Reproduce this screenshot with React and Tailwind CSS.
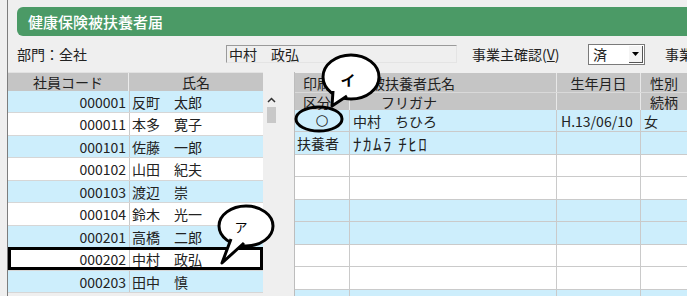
import React from 'react';

const employees = [
  ['000001', '反町　太郎'],
  ['000011', '本多　寛子'],
  ['000101', '佐藤　一郎'],
  ['000102', '山田　紀夫'],
  ['000103', '渡辺　崇'],
  ['000104', '鈴木　光一'],
  ['000201', '高橋　二郎'],
  ['000202', '中村　政弘'],
  ['000203', '田中　慎'],
];

const dependents = [
  { kubun: '○', name: '中村　ちひろ', birth: 'H.13/06/10', sex: '女', center: true },
  { kubun: '扶養者', name: 'ﾅｶﾑﾗ ﾁﾋﾛ', birth: '', sex: '', kana: true },
  {}, {}, {}, {}, {}, {}, {},
];

// annotation bubbles drawn over the page
function Callouts() {
  return (
    <svg className="absolute left-0 top-0 pointer-events-none" width="687" height="296">
      {/* ア */}
      <ellipse cx="246" cy="226" rx="27" ry="20" fill="#fff" stroke="#000" strokeWidth="3" />
      <path d="M231 239 L222 263 L244 243" fill="#fff" stroke="#000" strokeWidth="3" strokeLinejoin="round" />
      <text x="241" y="232" fontSize="13" textAnchor="middle" fill="#000" fontFamily="Noto Sans CJK JP, sans-serif">ア</text>

      {/* イ */}
      <ellipse cx="351" cy="77" rx="28" ry="22" fill="#fff" stroke="#000" strokeWidth="3" />
      <path d="M333 91 L332 106 L347 96" fill="#fff" stroke="#000" strokeWidth="3" strokeLinejoin="round" />
      <text x="348" y="86" fontSize="15" textAnchor="middle" fill="#000" fontWeight="bold" fontFamily="Noto Sans CJK JP, sans-serif">イ</text>
      <ellipse cx="319" cy="119" rx="23" ry="12" fill="none" stroke="#000" strokeWidth="3" />
    </svg>
  );
}

export default function App() {
  return (
    <div className="relative flex w-[687px] h-[296px] overflow-hidden bg-[#efefef] text-[14px] leading-none text-[#222] font-['Noto_Sans_CJK_JP',sans-serif]">
      <div className="w-[7px] shrink-0" />
      <div className="flex flex-col flex-1 min-w-0 border-l border-[#7d7d7d]">
        {/* title */}
        <div className="shrink-0 pl-[9px] pt-[7px]">
          <div className="flex items-center h-[29px] pl-[11px] rounded-l-[6px] bg-[#4b9a66] text-white text-[15px] font-medium">
            健康保険被扶養者届
          </div>
        </div>

        {/* filter row */}
        <div className="flex shrink-0 items-center h-[36px] pl-[9px] overflow-hidden">
          <span className="w-[209px] shrink-0">部門：全社</span>
          <div className="flex items-center w-[231px] h-[18px] shrink-0 pl-[2px] border-t border-l border-[#9a9a9a] border-r border-b border-r-[#e4e4e4] border-b-[#e4e4e4]">
            中村　政弘
          </div>
          <span className="w-[116px] shrink-0 ml-[15px]">事業主確認(<u>V</u>)</span>
          <div className="flex w-[57px] h-[21px] shrink-0 bg-white border border-[#7a7a7a]">
            <span className="flex-1 flex items-center pl-[4px]">済</span>
            <div className="flex items-center justify-center w-[14px] m-[1px] bg-[#f4f4f4] border-r border-b border-[#555]">
              <svg width="7" height="4" viewBox="0 0 7 4"><path d="M0 0 H7 L3.5 4 Z" fill="#000" /></svg>
            </div>
          </div>
          <span className="ml-[20px] shrink-0 whitespace-nowrap">事業</span>
        </div>

        {/* tables */}
        <div className="flex flex-1 min-h-0">
          {/* employee list */}
          <div className="flex flex-col w-[255px] shrink-0">
            <div className="flex shrink-0 h-[19px] bg-[#c5c5c5] border-t border-[#e2e2e2]">
              <div className="flex items-center justify-center w-[121px] border-r border-[#ececec]">社員コード</div>
              <div className="flex items-center justify-center flex-1">氏名</div>
            </div>
            {employees.map(([code, name], i) => (
              <div
                key={code}
                className={`relative flex shrink-0 ${i % 2 ? 'h-[23px]' : 'h-[22px]'} ${i % 2 === 0 ? 'bg-[#cdeefc]' : 'bg-white'} border-b border-[#d6d6d6]`}
              >
                <div className="flex items-center justify-end w-[121px] pr-[3px]">{code}</div>
                <div className="flex items-center flex-1 pl-[2px] border-l border-[#c9c9c9]">{name}</div>
                {code === '000202' && <div className="absolute inset-0 -top-px border-[3px] border-black" />}
              </div>
            ))}
          </div>

          {/* scrollbar */}
          <div className="flex flex-col w-[17px] shrink-0 pt-[25px] pl-[4px]">
            <svg width="9" height="6" viewBox="0 0 9 6"><path d="M1 5 L4.5 1.5 L8 5" fill="none" stroke="#333" strokeWidth="1.5" /></svg>
            <div className="w-[9px] h-[16px] mt-[4px] bg-[#c8c8c8]" />
          </div>

          <div className="w-[14px] shrink-0" />

          {/* dependents */}
          <div className="flex flex-col flex-1 pt-[1px] border-l border-[#bdbdbd]">
            <div className="flex shrink-0 h-[20px] bg-[#c5c5c5] border-b border-[#d9d9d9]">
              <div className="flex items-center w-[55px] pl-[8px] border-r border-[#e8e8e8]">印刷</div>
              <div className="flex items-center w-[207px] pl-[21px] border-r border-[#e8e8e8]">被扶養者氏名</div>
              <div className="flex items-center justify-center w-[84px] border-r border-[#e8e8e8]">生年月日</div>
              <div className="flex items-center justify-center flex-1">性別</div>
            </div>
            <div className="flex shrink-0 h-[17px] bg-[#c5c5c5]">
              <div className="flex items-center w-[55px] pl-[8px] border-r border-[#e8e8e8]">区分</div>
              <div className="flex items-center w-[207px] pl-[31px] border-r border-[#e8e8e8]">フリガナ</div>
              <div className="w-[84px] border-r border-[#e8e8e8]" />
              <div className="flex items-center justify-center flex-1">続柄</div>
            </div>
            {dependents.map((d, i) => (
              <div
                key={i}
                className={`flex shrink-0 ${i % 2 ? 'h-[23px]' : 'h-[22px]'} ${i % 4 < 2 ? 'bg-[#cdeefc]' : 'bg-white'} border-b border-[#cacaca]`}
              >
                <div className={`flex items-center w-[55px] border-r border-[#cacaca] ${d.center ? "justify-center text-[15px] font-['DejaVu_Sans',sans-serif]" : 'pl-[2px]'}`}>{d.kubun}</div>
                <div className={`flex items-center w-[207px] pl-[3px] border-r border-[#cacaca] ${d.kana ? 'text-[17px] tracking-[1.5px]' : ''}`}>{d.name}</div>
                <div className="flex items-center w-[84px] pl-[4px] border-r border-[#cacaca]">{d.birth}</div>
                <div className="flex items-center flex-1 pl-[3px]">{d.sex}</div>
              </div>
            ))}
          </div>
        </div>
      </div>
      <Callouts />
    </div>
  );
}
